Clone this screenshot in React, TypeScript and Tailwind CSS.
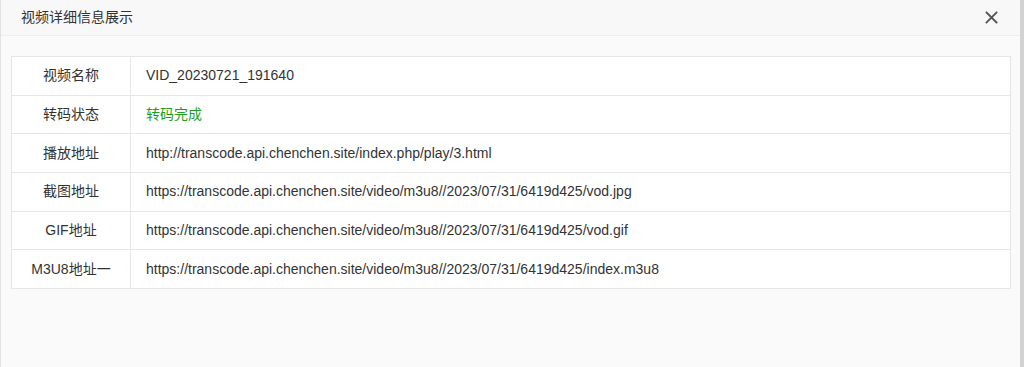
import React from "react";

const rows: { label: string; value: string; green?: boolean }[] = [
  { label: "视频名称", value: "VID_20230721_191640" },
  { label: "转码状态", value: "转码完成", green: true },
  { label: "播放地址", value: "http://transcode.api.chenchen.site/index.php/play/3.html" },
  { label: "截图地址", value: "https://transcode.api.chenchen.site/video/m3u8//2023/07/31/6419d425/vod.jpg" },
  { label: "GIF地址", value: "https://transcode.api.chenchen.site/video/m3u8//2023/07/31/6419d425/vod.gif" },
  { label: "M3U8地址一", value: "https://transcode.api.chenchen.site/video/m3u8//2023/07/31/6419d425/index.m3u8" },
];

export default function App() {
  return (
    <div
      className="flex h-[367px] w-[1024px] overflow-hidden bg-[#fafafa] text-[14px] text-[#333]"
      style={{ fontFamily: '"Liberation Sans", Arial, "Noto Sans CJK SC", sans-serif' }}
    >
      <div className="flex min-w-0 flex-1 flex-col border-l border-[#e2e2e2]">
        <div className="flex h-[36px] shrink-0 items-center justify-between border-b border-[#eeeeee] bg-[#f8f8f8] pl-[20px] pr-[22px]">
          <span className="text-[14px] text-[#333]">视频详细信息展示</span>
          <svg width="13" height="13" viewBox="0 0 13 13" className="text-[#555]">
            <path d="M1.5 1.5 L11.5 11.5 M11.5 1.5 L1.5 11.5" stroke="currentColor" strokeWidth="1.8" strokeLinecap="square" />
          </svg>
        </div>
        <div className="pl-[10px] pt-[20px]">
          <table className="w-[1000px] border-collapse bg-white">
            <tbody>
              {rows.map((r) => (
                <tr key={r.label} className="h-[38.67px]">
                  <td className="w-[119px] border border-[#e6e6e6] p-0 text-center">{r.label}</td>
                  <td className={`border border-[#e6e6e6] px-[15px] py-0 ${r.green ? "text-[#1e9e1e]" : "text-[#333]"}`}>
                    {r.value}
                  </td>
                </tr>
              ))}
            </tbody>
          </table>
        </div>
      </div>
      <div className="w-[4px] shrink-0 bg-[#d2d2d2]" />
    </div>
  );
}
